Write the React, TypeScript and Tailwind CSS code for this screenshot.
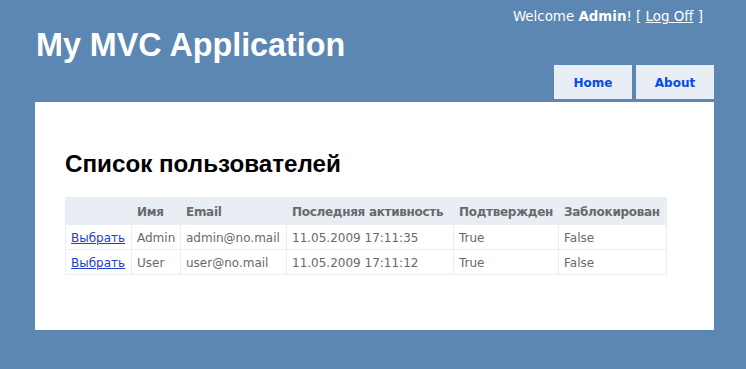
const users = [
  { name: "Admin", email: "admin@no.mail", last: "11.05.2009 17:11:35", approved: "True", locked: "False" },
  { name: "User", email: "user@no.mail", last: "11.05.2009 17:11:12", approved: "True", locked: "False" },
];

const verdana = "font-['Verdana','DejaVu_Sans',sans-serif]";
const arial = "font-['Arial','Liberation_Sans',sans-serif]";

const th = "border border-[#e8eef4] px-[5px] pt-px tracking-[-0.3px]";
const td = "border border-[#e8eef4] px-[5px] pt-px";

export default function App() {
  return (
    <div className={`min-h-[369px] bg-[#5c87b2] text-[#696969] ${verdana}`}>
      <div className="ml-[35px] w-[679px]">
        <header className="flex h-[99px] justify-between">
          <h1 className={`pt-[29px] pl-px text-[32.3px] font-bold leading-[32px] text-white ${arial}`}>
            My MVC Application
          </h1>
          <div className="flex flex-col items-end">
            <div className="mr-[11px] pt-[9px] text-[13.4px] leading-[16px] text-white">
              Welcome <b>Admin</b>! [ <a href="#" className="text-white underline">Log Off</a> ]
            </div>
            <nav className="mt-auto flex gap-[4px]">
              {["Home", "About"].map((t) => (
                <a
                  key={t}
                  href="#"
                  className="flex h-[34px] w-[78px] items-center justify-center bg-[#e8eef4] pt-px text-[12px] font-bold text-[#034af3]"
                >
                  {t}
                </a>
              ))}
            </nav>
          </div>
        </header>
        <main className="mt-[3px] h-[228px] bg-white px-[30px] pt-[50px]">
          <h2 className={`text-[24.2px] font-bold leading-[24px] text-black ${arial}`}>Список пользователей</h2>
          <table className="mt-[21px] w-[601px] table-fixed border-collapse whitespace-nowrap text-left text-[12px]">
            <thead>
              <tr className="h-[27px] bg-[#e8eef4]">
                <th className={`w-[66px] ${th}`}></th>
                <th className={`w-[49px] ${th}`}>Имя</th>
                <th className={`w-[106px] ${th}`}>Email</th>
                <th className={`w-[167px] ${th}`}>Последняя активность</th>
                <th className={`w-[105px] ${th}`}>Подтвержден</th>
                <th className={`w-[108px] ${th}`}>Заблокирован</th>
              </tr>
            </thead>
            <tbody>
              {users.map((u) => (
                <tr key={u.name} className="h-[25px]">
                  <td className={td}>
                    <a href="#" className="text-[#1d40c8] underline">Выбрать</a>
                  </td>
                  <td className={td}>{u.name}</td>
                  <td className={td}>{u.email}</td>
                  <td className={td}>{u.last}</td>
                  <td className={td}>{u.approved}</td>
                  <td className={td}>{u.locked}</td>
                </tr>
              ))}
            </tbody>
          </table>
        </main>
      </div>
    </div>
  );
}
